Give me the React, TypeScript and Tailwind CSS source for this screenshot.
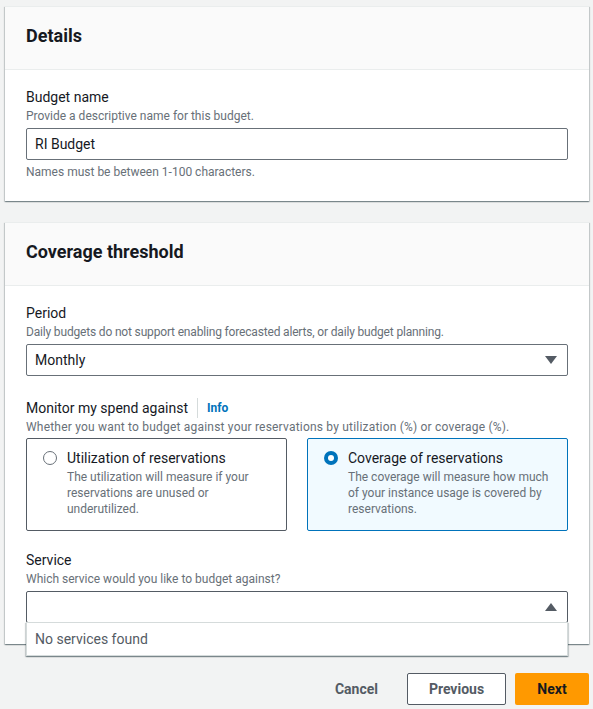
import React from "react";

const font = { fontFamily: 'Roboto, "Liberation Sans", Arial, sans-serif' };

function Field({
  label,
  desc,
  children,
  info,
  descClass = "",
}: {
  label: string;
  desc: string;
  children: React.ReactNode;
  info?: boolean;
  descClass?: string;
}) {
  return (
    <div className="flex flex-col">
      <div className="flex items-center text-[14px] leading-[22px] text-[#16191f]">
        <span>{label}</span>
        {info && (
          <>
            <span className="ml-[9px] mr-[9px] h-[20px] w-px bg-[#d5dbdb]" />
            <span className="text-[12px] font-bold text-[#0073bb]">Info</span>
          </>
        )}
      </div>
      <div className={"text-[12px] leading-[16px] text-[#687078] " + descClass}>{desc}</div>
      {children}
    </div>
  );
}

function Card({ title, children }: { title: string; children: React.ReactNode }) {
  return (
    <div className="relative border-t border-[#eaeded] bg-white shadow-[0_1px_1px_0_rgba(0,28,36,0.3),1px_1px_1px_0_rgba(0,28,36,0.15),-1px_1px_1px_0_rgba(0,28,36,0.15)]">
      <div className="h-[63px] border-b border-[#eaeded] bg-[#fafafa] pl-[21px] pr-[20px] pt-[18px]">
        <h2 className="text-[18px] font-bold leading-[22px] text-[#16191f]">{title}</h2>
      </div>
      <div className="px-[21px] pb-[21px] pt-[16px]">{children}</div>
    </div>
  );
}

function Tile({ title, desc, selected }: { title: string; desc: string; selected?: boolean }) {
  return (
    <div
      className={
        "flex flex-1 gap-[10px] rounded-[2px] border px-[16px] pb-[13px] pt-[8px] " +
        (selected ? "border-[#0073bb] bg-[#f1faff]" : "border-[#545b64] bg-white")
      }
    >
      <div className="pt-[4px]">
        {selected ? (
          <div className="flex h-[14px] w-[14px] items-center justify-center rounded-full bg-[#0073bb]">
            <div className="h-[6px] w-[6px] rounded-full bg-white" />
          </div>
        ) : (
          <div className="h-[14px] w-[14px] rounded-full border-[1.5px] border-[#687078] bg-white" />
        )}
      </div>
      <div className="flex flex-col">
        <div className="text-[14px] leading-[22px] text-[#16191f]">{title}</div>
        <div className="text-[12px] leading-[16px] text-[#687078]">{desc}</div>
      </div>
    </div>
  );
}

export default function App() {
  return (
    <div className="min-h-[709px] w-[593px] bg-[#f2f3f3] pl-[5px] pr-[4px] pt-[6px]" style={font}>
      <Card title="Details">
        <Field label="Budget name" desc="Provide a descriptive name for this budget.">
          <div className="mt-[4px] flex h-[32px] items-center rounded-[2px] border border-[#687078] bg-white px-[8px] text-[14px] text-[#16191f]">
            RI Budget
          </div>
          <div className="mt-[4px] text-[12px] leading-[16px] text-[#687078]">Names must be between 1-100 characters.</div>
        </Field>
      </Card>

      <div className="h-[21px]" />

      <Card title="Coverage threshold">
        <div className="flex flex-col">
          <Field
            label="Period"
            desc="Daily budgets do not support enabling forecasted alerts, or daily budget planning."
            descClass="tracking-[-0.17px]"
          >
            <div className="mt-[4px] flex h-[32px] items-center justify-between rounded-[2px] border border-[#687078] bg-white pl-[8px] pr-[10px] text-[14px] text-[#16191f]">
              <span>Monthly</span>
              <svg width="12" height="8" viewBox="0 0 12 8"><path d="M0 0h12L6 8z" fill="#545b64" /></svg>
            </div>
          </Field>
          <div className="mt-[21px]">
            <Field
              label="Monitor my spend against"
              desc="Whether you want to budget against your reservations by utilization (%) or coverage (%)."
              descClass="tracking-[0.2px]"
              info
            >
              <div className="mt-[3px] flex gap-[20px]">
                <Tile
                  title="Utilization of reservations"
                  desc="The utilization will measure if your reservations are unused or underutilized."
                />
                <Tile
                  selected
                  title="Coverage of reservations"
                  desc="The coverage will measure how much of your instance usage is covered by reservations."
                />
              </div>
            </Field>
          </div>
          <div className="mt-[18px]">
            <Field label="Service" desc="Which service would you like to budget against?">
              <div className="relative mt-[4px]">
                <div className="flex h-[32px] items-center justify-end rounded-[2px] border border-[#545b64] bg-white pr-[10px]">
                  <svg width="12" height="8" viewBox="0 0 12 8"><path d="M0 8h12L6 0z" fill="#545b64" /></svg>
                </div>
                <div className="absolute left-0 right-0 top-[31px] z-10 flex h-[34px] items-center border border-[#d5dbdb] bg-white px-[8px] text-[14px] text-[#545b64] shadow-[0_1px_1px_0_rgba(0,28,36,0.3),1px_1px_1px_0_rgba(0,28,36,0.15),-1px_1px_1px_0_rgba(0,28,36,0.15)]">
                  No services found
                </div>
              </div>
            </Field>
          </div>
        </div>
      </Card>

      <div className="mt-[29px] flex items-center justify-end gap-[9px]">
        <button className="h-[32px] px-[20px] text-[14px] font-bold text-[#545b64]">Cancel</button>
        <button className="h-[32px] w-[99px] rounded-[2px] border border-[#545b64] bg-white text-[14px] font-bold text-[#545b64]">Previous</button>
        <button className="h-[32px] w-[74px] rounded-[2px] bg-[#ff9900] text-[14px] font-bold text-[#16191f]">Next</button>
      </div>
    </div>
  );
}
